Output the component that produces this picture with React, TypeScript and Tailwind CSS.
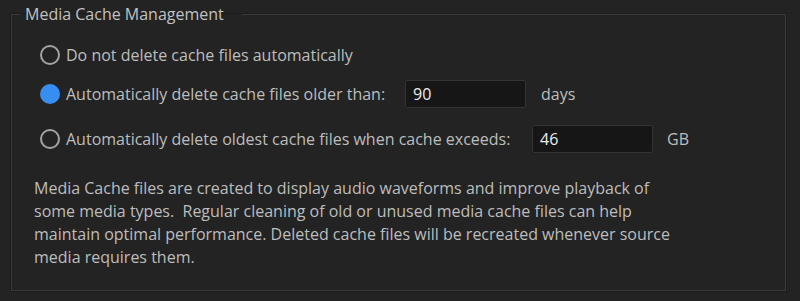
export default function App() {
  const font = { fontFamily: '"Open Sans", "Noto Sans", sans-serif' };
  return (
    <div className="w-[800px] h-[301px] bg-[#232323] overflow-hidden pt-[4px]" style={font}>
      <fieldset className="ml-[11px] w-[775px] h-[287px] border border-[#3a3a3a] shadow-[0_0_0_1px_#1c1c1c] pl-[28px]">
        <legend className="ml-[-20px] pl-[5px] pr-[18px] text-[16px] leading-[20px] text-[#c2c2c2]">
          Media Cache Management
        </legend>

        <div className="flex flex-col text-[16px] text-[#bdbdbd]">
          <div className="flex items-center h-[28px] mt-[17px]">
            <Radio />
            <span className="ml-[6px]">Do not delete cache files automatically</span>
          </div>

          <div className="flex items-center h-[28px] mt-[11px]">
            <Radio checked />
            <span className="ml-[6px] w-[339px]">Automatically delete cache files older than:</span>
            <NumberBox value="90" />
            <span className="ml-[15px]">days</span>
          </div>

          <div className="flex items-center h-[29px] mt-[16px]">
            <Radio />
            <span className="ml-[6px] w-[466px]">Automatically delete oldest cache files when cache exceeds:</span>
            <NumberBox value="46" />
            <span className="ml-[14px]">GB</span>
          </div>
        </div>

        <p className="mt-[24px] ml-[-6px] text-[16px] leading-[23px] text-[#bdbdbd] whitespace-nowrap">
          Media Cache files are created to display audio waveforms and improve playback of
          <br />
          some media types.&nbsp; Regular cleaning of old or unused media cache files can help
          <br />
          maintain optimal performance. Deleted cache files will be recreated whenever source
          <br />
          media requires them.
        </p>
      </fieldset>
    </div>
  );
}

function Radio({ checked = false }: { checked?: boolean }) {
  return checked ? (
    <div className="w-[20px] h-[20px] rounded-full bg-[#378ef0] shrink-0" />
  ) : (
    <div className="w-[20px] h-[20px] rounded-full border-2 border-[#a3a3a3] shrink-0" />
  );
}

function NumberBox({ value }: { value: string }) {
  return (
    <div className="w-[121px] h-[28px] shrink-0 rounded-[2px] border border-[#333] bg-[#161616] px-[7px] flex items-center text-[16px] font-medium text-[#ececec]">
      {value}
    </div>
  );
}
